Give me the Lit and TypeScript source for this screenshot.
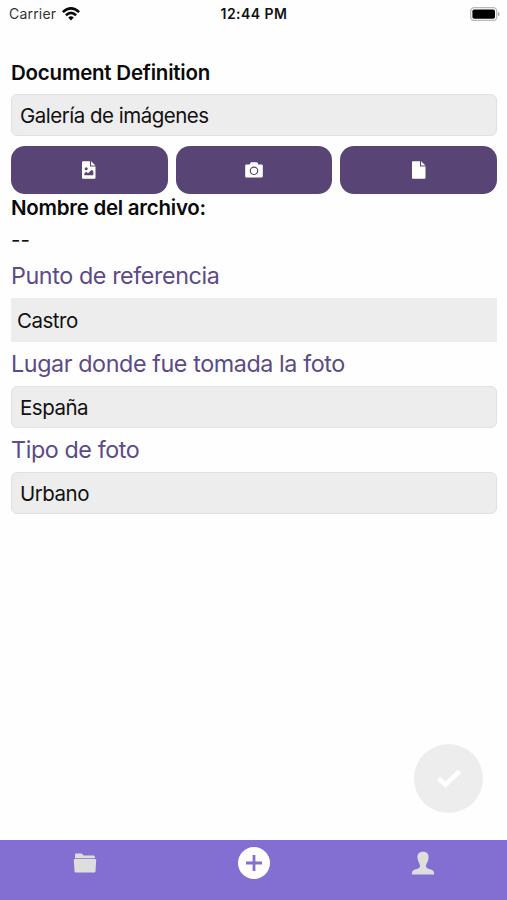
import { LitElement, html, css } from "lit";
import { customElement } from "lit/decorators.js";

@customElement("app-root")
export class AppRoot extends LitElement {
  static styles = css`
    :host {
      display: flex;
      flex-direction: column;
      height: 100vh;
      overflow: hidden;
      position: relative;
      background: #fefefe;
      color: #111;
      font-family: Inter, "Liberation Sans", sans-serif;
      font-size: 20.5px;
    }
    svg { display: block; }
    .status {
      display: grid;
      grid-template-columns: 1fr auto 1fr;
      align-items: center;
      height: 28px;
      box-sizing: border-box;
      padding: 0 7px 1px 9px;
      font-size: 14px;
    }
    .carrier { display: flex; align-items: center; gap: 6px; color: #333; letter-spacing: 0.2px; }
    .time { font-weight: 600; color: #111; letter-spacing: 0.45px; margin-right: 1px; }
    .battery { justify-self: end; }
    main { flex: 1; padding: 30px 10px 0 11px; }
    .title { font-weight: 600; line-height: 29px; height: 36px; color: #0a0a0a; letter-spacing: -0.22px; }
    .field {
      box-sizing: border-box;
      height: 42px;
      line-height: 42px;
      padding-left: 8px;
      border: 1px solid #e1e1e1;
      border-radius: 6px;
      background: #ededed;
      letter-spacing: -0.5px;
    }
    .plain { height: 44px; line-height: 45px; padding-left: 6px; border: 0; border-radius: 1px; }
    .actions { display: grid; grid-template-columns: repeat(3, 1fr); gap: 8px; margin-top: 10px; }
    .action {
      display: flex;
      align-items: center;
      justify-content: center;
      height: 48px;
      padding: 0;
      border: 0;
      border-radius: 14px;
      background: #584575;
    }
    .filename { font-weight: 600; line-height: 27px; color: #0a0a0a; letter-spacing: -0.26px; }
    .value { line-height: 37px; height: 36px; }
    .label { font-size: 23.3px; line-height: 44px; color: #5b4b86; letter-spacing: -0.4px; }
    .first { line-height: 38px; padding-bottom: 3px; }
    .fab {
      position: absolute;
      right: 24px;
      bottom: 87px;
      width: 69px;
      height: 69px;
      padding: 0;
      border: 0;
      border-radius: 50%;
      background: #ededed;
      display: flex;
      align-items: center;
      justify-content: center;
    }
    nav {
      display: grid;
      grid-template-columns: repeat(3, 1fr);
      justify-items: center;
      align-items: center;
      height: 60px;
      box-sizing: border-box;
      padding-bottom: 14px;
      background: #826fd1;
    }
  `;

  render() {
    return html`
      <header class="status">
        <div class="carrier">
          <span>Carrier</span>
          <svg width="18" height="14" viewBox="0 0 18 14" fill="none" stroke="#080808" stroke-width="2.6">
            <path d="M.9 5.1Q9-2.2 17.1 5.1M3.9 8.2Q9 3.6 14.1 8.2" />
            <path d="M6.2 10.5Q9 8 11.8 10.5L9 13.5Z" fill="#080808" stroke="none" />
          </svg>
        </div>
        <div class="time">12:44 PM</div>
        <svg class="battery" width="30" height="14" viewBox="0 0 30 14">
          <rect x=".7" y=".7" width="26" height="12.8" rx="3.6" fill="#fff" stroke="#b9b9b9" stroke-width="1.3" />
          <rect x="2.4" y="2.4" width="22.6" height="9.4" rx="1.8" />
          <path d="M28 5v4.3c2-.6 2-3.7 0-4.3z" fill="#aaa" />
        </svg>
      </header>
      <main>
        <div class="title">Document Definition</div>
        <div class="field">Galería de imágenes</div>
        <div class="actions">
          <button class="action" aria-label="Imagen">
            <svg width="14" height="18" viewBox="0 0 14 18">
              <path d="M1 .3H8V5.5H13.5V16.7Q13.500 17.700 12.500 17.700H1Q0 17.700 0 16.700V1.300Q0 .3 1 .3ZM9 .3L13.500 4.600H9Z" fill="#fff" />
              <circle cx="4.200" cy="7.700" r="1.500" fill="#584575" />
              <path d="M2.400 14.300V12.300L4.200 10.700 6 12.200 9.700 8.700 11.300 10.200V14.300Z" fill="#584575" />
            </svg>
          </button>
          <button class="action" aria-label="Cámara">
            <svg width="18" height="16" viewBox="0 0 18 16">
              <path d="M1.500 2.500H4.700L5.400.8Q5.600.3 6.300.3H11.700Q12.400.3 12.600.8L13.300 2.500H16.500Q17.800 2.500 17.800 3.800V14.200Q17.800 15.500 16.500 15.500H1.500Q.2 15.500.2 14.200V3.800Q.2 2.500 1.500 2.500Z" fill="#fff" />
              <circle cx="9" cy="8.800" r="3.700" fill="none" stroke="#584575" stroke-width="1.200" />
            </svg>
          </button>
          <button class="action" aria-label="Archivo">
            <svg width="14" height="18" viewBox="0 0 14 18">
              <path d="M1 .3H8V5.500H13.500V16.700Q13.500 17.700 12.500 17.700H1Q0 17.700 0 16.700V1.300Q0 .3 1 .3ZM9 .3L13.500 4.600H9Z" fill="#fff" />
            </svg>
          </button>
        </div>
        <div class="filename">Nombre del archivo:</div>
        <div class="value">--</div>
        <div class="label first">Punto de referencia</div>
        <div class="field plain">Castro</div>
        <div class="label">Lugar donde fue tomada la foto</div>
        <div class="field">España</div>
        <div class="label">Tipo de foto</div>
        <div class="field">Urbano</div>
      </main>
      <button class="fab" aria-label="Confirmar">
        <svg width="26" height="20" viewBox="0 0 26 20" fill="none" stroke="#fff" stroke-width="4.800">
          <path d="M2.500 9.500L9.500 15.500L23.500 2.500" />
        </svg>
      </button>
      <nav>
        <svg width="24" height="20" viewBox="0 0 24 20" fill="#dedede">
          <path d="M2 5.300V1.800Q2 .5 3.300.5H8.500L10.800 2.600H20.500Q21.900 2.600 21.900 3.800V5.300Z" />
          <path d="M1.700 6H22.300Q23.300 6 23.200 7L22.500 18.300Q22.400 19.500 21.200 19.500H2.800Q1.600 19.500 1.500 18.300L.8 7Q.7 6 1.700 6Z" />
        </svg>
        <svg width="32" height="32" viewBox="0 0 32 32">
          <circle cx="16" cy="16" r="16" fill="#fff" />
          <path d="M16 8V24M8 16H24" stroke="#826fd1" stroke-width="2.800" />
        </svg>
        <svg width="24" height="24" viewBox="0 0 24 24" fill="#dedede">
          <path d="M12 .8C16.200.8 17.900 3.300 17.500 7.200C17.200 10.700 15.200 12.300 15 14.700C15 17.500 17.800 17.800 20 18.600C22.500 19.500 23.200 21 23.200 23.400H.8C.8 21 1.500 19.500 4 18.600C6.200 17.800 9 17.500 9 14.700C8.800 12.300 6.800 10.700 6.500 7.200C6.100 3.300 7.800.8 12 .8Z" />
        </svg>
      </nav>
    `;
  }
}
